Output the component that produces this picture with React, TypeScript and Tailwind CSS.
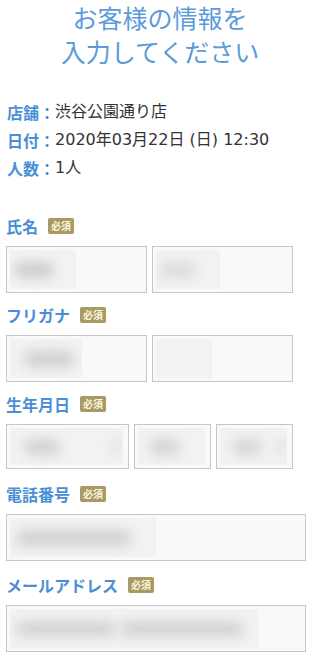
import type { ReactNode } from 'react'

const font = { fontFamily: '"DejaVu Sans", "Noto Sans CJK JP", sans-serif' }
const cjk = { fontFamily: '"Noto Sans CJK JP", sans-serif' }

type Blob = { w: number; x: number; c: string }

function Field({ width, height = 47, rect, blobs }: { width: string; height?: number; rect: number; blobs: Blob[] }) {
  return (
    <div
      className={`${width} flex items-stretch border border-[#c6c6c6] bg-[#f9f9f9] p-[3px]`}
      style={{ height }}
    >
      <div className="relative overflow-hidden bg-[#f2f2f2]" style={{ width: rect }}>
        {blobs.map((b, i) => (
          <span
            key={i}
            className="absolute top-1/2 h-[16px] -translate-y-1/2 rounded-full blur-[6px]"
            style={{ left: b.x, width: b.w, background: b.c }}
          />
        ))}
      </div>
    </div>
  )
}

function Label({ children }: { children: ReactNode }) {
  return (
    <div className="mb-[9px] flex h-[22px] items-center gap-[10px]">
      <span className="text-[16px] font-bold text-[#4a8fd6]" style={cjk}>
        {children}
      </span>
      <span
        className="flex h-[16px] w-[26px] items-center justify-center rounded-[2px] bg-[#a89a62] text-[10px] font-bold leading-none text-[#fbf6e0]"
        style={cjk}
      >
        必須
      </span>
    </div>
  )
}

function InfoRow({ label, value }: { label: string; value: string }) {
  return (
    <div className="flex h-[28px] items-center text-[16px]">
      <span className="font-bold text-[#4a8fd6]" style={cjk}>
        {label}
      </span>
      <span className="font-bold text-[#4a8fd6]" style={cjk}>
        ：
      </span>
      <span className="text-[#333]">{value}</span>
    </div>
  )
}

export default function App() {
  return (
    <div className="min-h-[655px] w-[320px] bg-white" style={font}>
      <div className="w-[300px] pl-[6px]">
        <h1 className="pl-[14px] text-center text-[25px] font-normal leading-[34px] text-[#5b9bd9]" style={cjk}>
          お客様の情報を
          <br />
          入力してください
        </h1>

        <div className="mt-[30px] pl-[1px]">
          <InfoRow label="店舗" value="渋谷公園通り店" />
          <InfoRow label="日付" value="2020年03月22日 (日) 12:30" />
          <InfoRow label="人数" value="1人" />
        </div>

        <div className="mt-[33px]">
          <Label>氏名</Label>
          <div className="flex gap-[5px]">
            <Field width="w-[141px]" rect={66} blobs={[{ x: 4, w: 40, c: '#cecece' }]} />
            <Field width="w-[141px]" rect={64} blobs={[{ x: 4, w: 36, c: '#dcdcdc' }]} />
          </div>
        </div>

        <div className="mt-[11px]">
          <Label>フリガナ</Label>
          <div className="flex gap-[5px]">
            <Field width="w-[141px]" rect={72} blobs={[{ x: 14, w: 50, c: '#d0d0d0' }]} />
            <Field width="w-[141px]" rect={56} blobs={[]} />
          </div>
        </div>

        <div className="mt-[11px]">
          <Label>生年月日</Label>
          <div className="flex gap-[5px]">
            <Field
              width="w-[123px]"
              height={45}
              rect={113}
              blobs={[
                { x: 14, w: 36, c: '#d2d2d2' },
                { x: 102, w: 10, c: '#e2e2e2' },
              ]}
            />
            <Field width="w-[77px]" height={45} rect={67} blobs={[{ x: 12, w: 30, c: '#d4d4d4' }]} />
            <Field
              width="w-[77px]"
              height={45}
              rect={67}
              blobs={[
                { x: 12, w: 30, c: '#d6d6d6' },
                { x: 56, w: 10, c: '#e2e2e2' },
              ]}
            />
          </div>
        </div>

        <div className="mt-[14px]">
          <Label>電話番号</Label>
          <Field width="w-[300px]" rect={146} blobs={[{ x: 6, w: 116, c: '#d2d2d2' }]} />
        </div>

        <div className="mt-[13px]">
          <Label>メールアドレス</Label>
          <Field
            width="w-[300px]"
            rect={248}
            blobs={[
              { x: 6, w: 100, c: '#d4d4d4' },
              { x: 110, w: 124, c: '#d4d4d4' },
            ]}
          />
        </div>
      </div>
    </div>
  )
}
